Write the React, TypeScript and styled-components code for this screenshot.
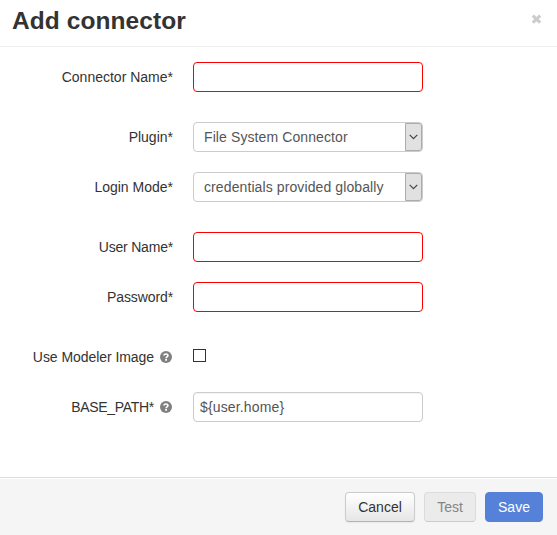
import React from 'react';
import styled, { createGlobalStyle } from 'styled-components';

const GlobalStyle = createGlobalStyle`
  *, *::before, *::after { box-sizing: border-box; }
  html, body { margin: 0; background: #fff; overflow: hidden; }
  body, input, button {
    font-family: 'Liberation Sans', Arial, sans-serif;
    font-size: 14px;
    line-height: 20px;
  }
  body { color: #333; }
`;

const Dialog = styled.div`
  display: flex;
  flex-direction: column;
  width: 557px;
  height: 535px;
  background: #fff;
`;

const Header = styled.header`
  display: flex;
  justify-content: space-between;
  height: 47px;
  padding: 0 15px 0 12px;
  border-bottom: 1px solid #eee;
`;

const Title = styled.h3`
  margin: 1px 0 0;
  font-size: 24.5px;
  line-height: 40px;
  font-weight: bold;
  letter-spacing: 0.08px;
  white-space: nowrap;
`;

const CloseButton = styled.button`
  display: block;
  align-self: flex-start;
  margin: 14px 0 0;
  padding: 0;
  border: 0;
  background: none;
  line-height: 0;
  color: #ccc;
`;

const Form = styled.form`
  display: flex;
  flex-direction: column;
  flex: 1;
  padding-top: 15px;
`;

const Row = styled.div<{ $gap: number }>`
  display: flex;
  gap: 20px;
  height: 30px;
  margin-bottom: ${({ $gap }) => $gap}px;
`;

const Label = styled.label<{ $tracking: number }>`
  display: flex;
  justify-content: flex-end;
  align-items: center;
  gap: 6px;
  width: 173px;
  letter-spacing: ${({ $tracking }) => $tracking}px;
  white-space: nowrap;
  svg { margin-right: 1px; }
`;

const TextInput = styled.input<{ $invalid?: boolean }>`
  width: 230px;
  height: 30px;
  padding: 4px 6px;
  border: 1px solid ${({ $invalid }) => ($invalid ? '#f00' : '#ccc')};
  border-radius: 4px;
  background: #fff;
  color: #555;
  letter-spacing: 0.15px;
  outline: none;
  box-shadow: ${({ $invalid }) => ($invalid ? 'none' : 'inset 0 1px 1px rgba(0, 0, 0, 0.05)')};
`;

const Select = styled.div`
  display: flex;
  width: 230px;
  height: 30px;
  border: 1px solid #ccc;
  border-radius: 4px;
  background: #fff;
  color: #555;
`;

const SelectValue = styled.span`
  flex: 1;
  padding: 4px 0 4px 10px;
  letter-spacing: 0.1px;
  white-space: nowrap;
`;

const SelectArrow = styled.span`
  display: flex;
  align-items: center;
  justify-content: center;
  width: 17px;
  border: 1px solid #acacac;
  border-radius: 0 3px 3px 0;
  background: #e1e1e1;
`;

const Checkbox = styled.input`
  appearance: none;
  width: 13px;
  height: 13px;
  margin: 7px 0 0;
  border: 1px solid #333;
  background: #fff;
`;

const Footer = styled.footer`
  display: flex;
  justify-content: flex-end;
  gap: 9px;
  height: 58px;
  padding: 14px 14px 0 0;
  border-top: 1px solid #ddd;
  background: #f5f5f5;
  box-shadow: inset 0 1px 0 #fff;
`;

const Button = styled.button<{ $width: number }>`
  width: ${({ $width }) => $width}px;
  height: 30px;
  padding: 0;
  border: 1px solid #ccc;
  border-bottom-color: #b3b3b3;
  border-radius: 4px;
  color: #333;
  background: linear-gradient(#fff, #e6e6e6);
  box-shadow: inset 0 1px 0 rgba(255, 255, 255, 0.2), 0 1px 2px rgba(0, 0, 0, 0.05);
`;

const DisabledButton = styled(Button)`
  color: #858585;
  border-color: #dbdbdb;
  border-bottom-color: #cbcbcb;
  background: #ebebeb;
  box-shadow: none;
`;

const PrimaryButton = styled(Button)`
  color: #fff;
  border-color: #5581d9;
  background: #5581d9;
  box-shadow: none;
`;

const HelpIcon = () => (
  <svg width="12" height="12" viewBox="0 0 12 12" fill="none" aria-hidden="true">
    <circle cx="6" cy="6" r="6" fill="#808080" />
    <path d="M4 4.6C4 2.4 7.9 2.5 7.9 4.6C7.9 5.9 6.1 5.8 6.1 7.2" stroke="#fff" strokeWidth="1.7" />
    <path d="M5.2 8h1.8v1.7H5.2z" fill="#fff" />
  </svg>
);

const Chevron = () => (
  <svg width="9" height="6" viewBox="0 0 9 6" fill="none" aria-hidden="true">
    <path d="M.7.9l3.8 3.8L8.3.9" stroke="#444" strokeWidth="1.2" />
  </svg>
);

const CloseIcon = () => (
  <svg width="11" height="11" viewBox="0 0 11 11" fill="none" aria-hidden="true">
    <path d="M1.8 1.7l7.4 7M9.2 1.7l-7.4 7" stroke="currentColor" strokeWidth="3.1" />
  </svg>
);

const Dropdown = ({ value }: { value: string }) => (
  <Select role="combobox" tabIndex={0}>
    <SelectValue>{value}</SelectValue>
    <SelectArrow><Chevron /></SelectArrow>
  </Select>
);

interface FieldProps {
  label: string;
  gap: number;
  tracking?: number;
  help?: boolean;
  children: React.ReactNode;
}

const Field = ({ label, gap, tracking = 0, help, children }: FieldProps) => (
  <Row $gap={gap}>
    <Label $tracking={tracking}>{label}{help && <HelpIcon />}</Label>
    {children}
  </Row>
);

export default function App() {
  return (
    <>
      <GlobalStyle />
      <Dialog role="dialog">
        <Header>
          <Title>Add connector</Title>
          <CloseButton aria-label="Close"><CloseIcon /></CloseButton>
        </Header>
        <Form>
          <Field label="Connector Name*" gap={30}><TextInput $invalid /></Field>
          <Field label="Plugin*" gap={20}><Dropdown value="File System Connector" /></Field>
          <Field label="Login Mode*" gap={30}><Dropdown value="credentials provided globally" /></Field>
          <Field label="User Name*" gap={20} tracking={-0.2}><TextInput $invalid /></Field>
          <Field label="Password*" gap={30} tracking={-0.1}><TextInput $invalid type="password" /></Field>
          <Field label="Use Modeler Image" gap={20} tracking={-0.06} help><Checkbox type="checkbox" /></Field>
          <Field label="BASE_PATH*" gap={0} tracking={-0.3} help><TextInput defaultValue="${user.home}" /></Field>
        </Form>
        <Footer>
          <Button $width={70}>Cancel</Button>
          <DisabledButton $width={52} disabled>Test</DisabledButton>
          <PrimaryButton $width={58}>Save</PrimaryButton>
        </Footer>
      </Dialog>
    </>
  );
}
